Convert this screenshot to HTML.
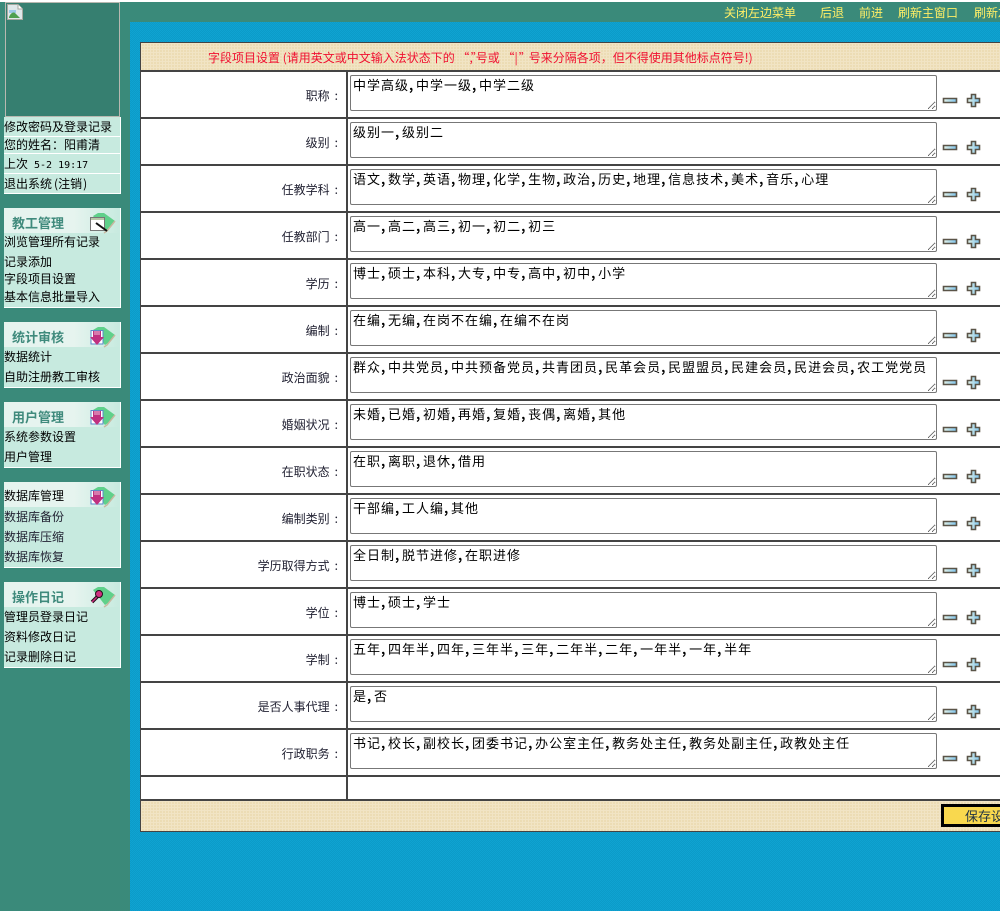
<!DOCTYPE html>
<html lang="zh"><head><meta charset="utf-8"><title>字段项目设置</title>
<style>
html,body{margin:0;padding:0;width:1000px;height:911px;overflow:hidden;background:#3a8a7a}
body{position:relative;font:12px/14px "WenQuanYi Zen Hei","Noto Sans CJK SC",sans-serif;color:#000}
div,a,textarea,svg{position:absolute;box-sizing:border-box}
.t{white-space:nowrap}
.top{position:absolute;left:0;top:0;width:1000px;height:2px;background:#fff}
.blue{left:130px;top:22px;width:870px;height:889px;background-color:#0fa3d2;background-image:conic-gradient(#0c9bc8 25%,transparent 0 50%,#0c9bc8 0 75%,transparent 0);background-size:2px 2px}
.lnk{top:6px;color:#ffef66;white-space:nowrap}
.pic{left:5px;top:2px;width:115px;height:115px;border:1px solid #b8b8b0;background:#367f70}
.panel{left:4px;width:117px;background:#c7eadf;border-right:1px solid #fff;border-bottom:1px solid #fff}
.hd{left:0;top:0;width:116px;height:25px;background:linear-gradient(90deg,#e6f4ef,#e6f4ef 60%,#c7eadf)}
.hd b{position:absolute;left:8px;top:8px;color:#3f8a7c;font-size:13px;font-weight:bold;white-space:nowrap}
.sep{left:0;width:116px;height:1px;background:#fff}
.m{left:0;white-space:nowrap}
.tb{left:140px;top:42px;width:870px;height:790px;background:#fff;border:1px solid #444}
.beige{left:141px;width:869px;background-color:#ecdcb4;background-image:linear-gradient(#f1e4c4 1px,transparent 1px),linear-gradient(90deg,#f1e4c4 1px,transparent 1px);background-size:3px 3px}
.hl{left:141px;width:869px;height:2px;background:#444}
.vl{left:346px;top:71px;width:2px;height:729px;background:#444}
.lb{left:141px;width:198px;text-align:right;white-space:nowrap;color:#223}
.lb i{font-style:normal;margin-left:5px;margin-right:1px}
textarea{left:350px;width:587px;height:36px;margin:0;padding:1px 2px;border:1px solid #777;border-radius:2px;background:#fff;overflow:hidden;resize:both}
.v{left:353px;font:13px/16px "WenQuanYi Zen Hei","Noto Sans CJK SC",sans-serif;letter-spacing:1px;white-space:nowrap;color:#000}
.v i{display:inline-block;width:7px;font-style:normal;letter-spacing:0;font-weight:bold}
.save{left:941px;top:804px;width:70px;height:23px;border:3px solid #000;background:#f9d84e;font-size:13px;line-height:17px;padding-left:21px;white-space:nowrap;color:#234}
</style></head><body>
<div class="top"></div>
<div class="blue"></div>
<div class="lnk" style="left:724px">关闭左边菜单</div><div class="lnk" style="left:820px">后退</div><div class="lnk" style="left:859px">前进</div><div class="lnk" style="left:898px">刷新主窗口</div><div class="lnk" style="left:974px">刷新左栏</div>

<svg style="left:0;top:0" width="0" height="0"><defs>
<linearGradient id="g"><stop offset="0" stop-color="#e6f2e6"/><stop offset="1" stop-color="#7cc4ee"/></linearGradient>
<g id="mi"><path d="M1.500 1.500H14.500V5.500H1.500Z" fill="url(#g)" stroke="#5a5448" stroke-width="1.600"/></g>
<g id="pl"><path d="M5.500 1.500H9.500V5.500H13.500V9.500H9.500V13.500H5.500V9.500H1.500V5.500H5.500Z" fill="url(#g)" stroke="#5a5448" stroke-width="1.600"/></g>
<g id="leaf"><path d="M4 4L9 1H15L26 9L19 17L16 19Z" fill="#5fd08a"/><path d="M26 9L18 19L15 21" fill="none" stroke="#c8b8a0" stroke-width="1.500"/></g>
<g id="arr"><use href="#leaf"/><path d="M2 4.500H14V18H2Z" fill="#fff" stroke="#5a8ac8"/><path d="M4 5H12V11H15L8 19L1 11H4Z" fill="#c03080"/><path d="M6 5V9M8 5V9M10 5V9" stroke="#f0c0d8"/></g>
</defs></svg>

<div class="pic"><svg style="left:1px;top:1px" width="16" height="16" viewBox="0 0 16 16"><path d="M.5.5H11L15.500 5V15.500H.5Z" fill="#dfe8ea" stroke="#a8a8a0"/><path d="M11 .5V5H15.500" fill="#fff" stroke="#a8a8a0"/><path d="M2 6H9V9H2Z" fill="#9cc8e8"/><path d="M2 13C4 8 7 8 8 9L13 14H2Z" fill="#4fa050"/></svg></div>
<div class="panel" style="top:117px;height:77px">
<div class="m" style="top:3px">修改密码及登录记录</div><div class="sep" style="top:19px"></div>
<div class="m" style="top:21px">您的姓名：阳甫清</div><div class="sep" style="top:36px"></div>
<div class="m" style="top:40px">上次<span style="margin-left:6px;font:10px/14px 'DejaVu Sans Mono',monospace">5-2 19:17</span></div><div class="sep" style="top:56px"></div>
<div class="m" style="top:60px">退出系统<span style="margin-left:2px">(</span>注销<span style="margin-left:1px">)</span></div></div>

<div class="panel" style="top:208px;height:100px"><div class="hd"><b>教工管理</b></div>
<svg style="left:85px;top:4px" width="27" height="22" viewBox="0 0 27 22"><use href="#leaf"/><path d="M1.500 5.500H15.500V18.500H1.500Z" fill="#fff" stroke="#777"/><path d="M2 6H15V8H2Z" fill="#b8c8a8"/><path d="M7 11L18 19" stroke="#111" stroke-width="2"/></svg>
<div class="m" style="top:27px">浏览管理所有记录</div><div class="m" style="top:47px">记录添加</div><div class="m" style="top:64px">字段项目设置</div><div class="m" style="top:82px">基本信息批量导入</div></div>

<div class="panel" style="top:322px;height:66px"><div class="hd"><b>统计审核</b></div>
<svg style="left:85px;top:4px" width="27" height="22" viewBox="0 0 27 22"><use href="#arr"/></svg>
<div class="m" style="top:28px">数据统计</div><div class="m" style="top:48px">自助注册教工审核</div></div>

<div class="panel" style="top:402px;height:66px"><div class="hd"><b>用户管理</b></div>
<svg style="left:85px;top:4px" width="27" height="22" viewBox="0 0 27 22"><use href="#arr"/></svg>
<div class="m" style="top:28px">系统参数设置</div><div class="m" style="top:48px">用户管理</div></div>

<div class="panel" style="top:482px;height:86px"><div class="hd"><div class="m" style="top:7px;left:0">数据库管理</div></div>
<svg style="left:85px;top:4px" width="27" height="22" viewBox="0 0 27 22"><use href="#arr"/></svg>
<div class="m" style="top:28px;color:#223">数据库备份</div><div class="m" style="top:48px;color:#223">数据库压缩</div><div class="m" style="top:68px;color:#223">数据库恢复</div></div>

<div class="panel" style="top:582px;height:86px"><div class="hd"><b>操作日记</b></div>
<svg style="left:85px;top:4px" width="27" height="22" viewBox="0 0 27 22"><use href="#leaf"/><path d="M3 16L9 10" stroke="#201018" stroke-width="3.500"/><path d="M3 16L9 10" stroke="#d03080" stroke-width="1.500"/><circle cx="10" cy="8" r="3.500" fill="#d03080" stroke="#201018"/></svg>
<div class="m" style="top:28px">管理员登录日记</div><div class="m" style="top:48px">资料修改日记</div><div class="m" style="top:68px">记录删除日记</div></div>

<div class="tb"></div>
<div class="beige" style="top:43px;height:27px"></div>
<div class="t" style="left:208px;top:51px;color:#f01030">字段项目设置 (请用英文或中文输入法状态下的 “<span style="letter-spacing:-2px">,</span><span style="letter-spacing:-7px">”</span>号或 “|<span style="margin-left:1px;letter-spacing:-2px">”</span>号来分隔各项，但不得使用其他标点符号!)</div>
<div class="hl" style="top:70px"></div><div class="hl" style="top:117px"></div><div class="hl" style="top:164px"></div><div class="hl" style="top:211px"></div><div class="hl" style="top:258px"></div><div class="hl" style="top:305px"></div><div class="hl" style="top:352px"></div><div class="hl" style="top:399px"></div><div class="hl" style="top:446px"></div><div class="hl" style="top:493px"></div><div class="hl" style="top:540px"></div><div class="hl" style="top:587px"></div><div class="hl" style="top:634px"></div><div class="hl" style="top:681px"></div><div class="hl" style="top:728px"></div><div class="hl" style="top:775px"></div><div class="hl" style="top:799px"></div>
<div class="vl"></div>
<div class="beige" style="top:801px;height:30px"></div>

<div class="lb" style="top:89px">职称<i>:</i></div><textarea style="top:75px"></textarea><div class="v" style="top:77px">中学高级<i>,</i>中学一级<i>,</i>中学二级</div><svg style="left:942px;top:97px" width="16" height="7"><use href="#mi"/></svg><svg style="left:966px;top:93px" width="15" height="15"><use href="#pl"/></svg>
<div class="lb" style="top:136px">级别<i>:</i></div><textarea style="top:122px"></textarea><div class="v" style="top:124px">级别一<i>,</i>级别二</div><svg style="left:942px;top:144px" width="16" height="7"><use href="#mi"/></svg><svg style="left:966px;top:140px" width="15" height="15"><use href="#pl"/></svg>
<div class="lb" style="top:183px">任教学科<i>:</i></div><textarea style="top:169px"></textarea><div class="v" style="top:171px">语文<i>,</i>数学<i>,</i>英语<i>,</i>物理<i>,</i>化学<i>,</i>生物<i>,</i>政治<i>,</i>历史<i>,</i>地理<i>,</i>信息技术<i>,</i>美术<i>,</i>音乐<i>,</i>心理</div><svg style="left:942px;top:191px" width="16" height="7"><use href="#mi"/></svg><svg style="left:966px;top:187px" width="15" height="15"><use href="#pl"/></svg>
<div class="lb" style="top:230px">任教部门<i>:</i></div><textarea style="top:216px"></textarea><div class="v" style="top:218px">高一<i>,</i>高二<i>,</i>高三<i>,</i>初一<i>,</i>初二<i>,</i>初三</div><svg style="left:942px;top:238px" width="16" height="7"><use href="#mi"/></svg><svg style="left:966px;top:234px" width="15" height="15"><use href="#pl"/></svg>
<div class="lb" style="top:277px">学历<i>:</i></div><textarea style="top:263px"></textarea><div class="v" style="top:265px">博士<i>,</i>硕士<i>,</i>本科<i>,</i>大专<i>,</i>中专<i>,</i>高中<i>,</i>初中<i>,</i>小学</div><svg style="left:942px;top:285px" width="16" height="7"><use href="#mi"/></svg><svg style="left:966px;top:281px" width="15" height="15"><use href="#pl"/></svg>
<div class="lb" style="top:324px">编制<i>:</i></div><textarea style="top:310px"></textarea><div class="v" style="top:312px">在编<i>,</i>无编<i>,</i>在岗不在编<i>,</i>在编不在岗</div><svg style="left:942px;top:332px" width="16" height="7"><use href="#mi"/></svg><svg style="left:966px;top:328px" width="15" height="15"><use href="#pl"/></svg>
<div class="lb" style="top:371px">政治面貌<i>:</i></div><textarea style="top:357px"></textarea><div class="v" style="top:359px">群众<i>,</i>中共党员<i>,</i>中共预备党员<i>,</i>共青团员<i>,</i>民革会员<i>,</i>民盟盟员<i>,</i>民建会员<i>,</i>民进会员<i>,</i>农工党党员</div><svg style="left:942px;top:379px" width="16" height="7"><use href="#mi"/></svg><svg style="left:966px;top:375px" width="15" height="15"><use href="#pl"/></svg>
<div class="lb" style="top:418px">婚姻状况<i>:</i></div><textarea style="top:404px"></textarea><div class="v" style="top:406px">未婚<i>,</i>已婚<i>,</i>初婚<i>,</i>再婚<i>,</i>复婚<i>,</i>丧偶<i>,</i>离婚<i>,</i>其他</div><svg style="left:942px;top:426px" width="16" height="7"><use href="#mi"/></svg><svg style="left:966px;top:422px" width="15" height="15"><use href="#pl"/></svg>
<div class="lb" style="top:465px">在职状态<i>:</i></div><textarea style="top:451px"></textarea><div class="v" style="top:453px">在职<i>,</i>离职<i>,</i>退休<i>,</i>借用</div><svg style="left:942px;top:473px" width="16" height="7"><use href="#mi"/></svg><svg style="left:966px;top:469px" width="15" height="15"><use href="#pl"/></svg>
<div class="lb" style="top:512px">编制类别<i>:</i></div><textarea style="top:498px"></textarea><div class="v" style="top:500px">干部编<i>,</i>工人编<i>,</i>其他</div><svg style="left:942px;top:520px" width="16" height="7"><use href="#mi"/></svg><svg style="left:966px;top:516px" width="15" height="15"><use href="#pl"/></svg>
<div class="lb" style="top:559px">学历取得方式<i>:</i></div><textarea style="top:545px"></textarea><div class="v" style="top:547px">全日制<i>,</i>脱节进修<i>,</i>在职进修</div><svg style="left:942px;top:567px" width="16" height="7"><use href="#mi"/></svg><svg style="left:966px;top:563px" width="15" height="15"><use href="#pl"/></svg>
<div class="lb" style="top:606px">学位<i>:</i></div><textarea style="top:592px"></textarea><div class="v" style="top:594px">博士<i>,</i>硕士<i>,</i>学士</div><svg style="left:942px;top:614px" width="16" height="7"><use href="#mi"/></svg><svg style="left:966px;top:610px" width="15" height="15"><use href="#pl"/></svg>
<div class="lb" style="top:653px">学制<i>:</i></div><textarea style="top:639px"></textarea><div class="v" style="top:641px">五年<i>,</i>四年半<i>,</i>四年<i>,</i>三年半<i>,</i>三年<i>,</i>二年半<i>,</i>二年<i>,</i>一年半<i>,</i>一年<i>,</i>半年</div><svg style="left:942px;top:661px" width="16" height="7"><use href="#mi"/></svg><svg style="left:966px;top:657px" width="15" height="15"><use href="#pl"/></svg>
<div class="lb" style="top:700px">是否人事代理<i>:</i></div><textarea style="top:686px"></textarea><div class="v" style="top:688px">是<i>,</i>否</div><svg style="left:942px;top:708px" width="16" height="7"><use href="#mi"/></svg><svg style="left:966px;top:704px" width="15" height="15"><use href="#pl"/></svg>
<div class="lb" style="top:747px">行政职务<i>:</i></div><textarea style="top:733px"></textarea><div class="v" style="top:735px">书记<i>,</i>校长<i>,</i>副校长<i>,</i>团委书记<i>,</i>办公室主任<i>,</i>教务处主任<i>,</i>教务处副主任<i>,</i>政教处主任</div><svg style="left:942px;top:755px" width="16" height="7"><use href="#mi"/></svg><svg style="left:966px;top:751px" width="15" height="15"><use href="#pl"/></svg>

<div class="save">保存设置</div>
</body></html>
